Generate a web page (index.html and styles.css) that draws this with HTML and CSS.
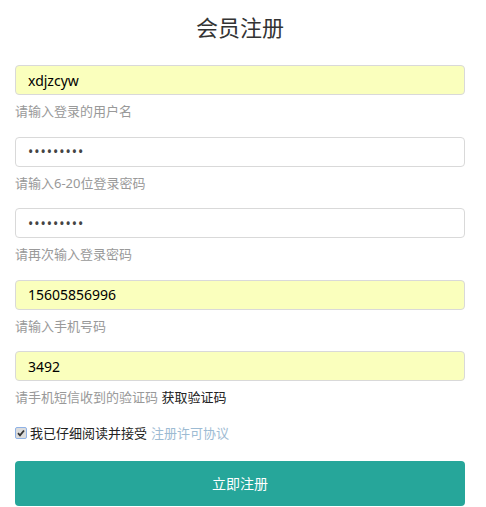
FILE: index.html
```html
<!DOCTYPE html>
<html lang="zh-CN">
<head>
    <meta charset="UTF-8">
    <meta name="viewport" content="width=device-width, initial-scale=1.0">
    <title>会员注册</title>
    <link rel="stylesheet" href="styles.css">
</head>
<body>
    <div class="container">
        <h2 class="title">会员注册</h2>
        <form class="reg-form">
            <div class="form-group">
                <input class="form-control filled" type="text" value="xdjzcyw">
                <p class="help">请输入登录的用户名</p>
            </div>
            <div class="form-group">
                <input class="form-control pwd" type="password" value="123456789">
                <p class="help">请输入6-20位登录密码</p>
            </div>
            <div class="form-group">
                <input class="form-control pwd" type="password" value="123456789">
                <p class="help">请再次输入登录密码</p>
            </div>
            <div class="form-group">
                <input class="form-control filled" type="text" value="15605856996">
                <p class="help">请输入手机号码</p>
            </div>
            <div class="form-group">
                <input class="form-control filled" type="text" value="3492">
                <p class="help">请手机短信收到的验证码 <a class="get-code" href="#">获取验证码</a></p>
            </div>
            <div class="agree">
                <span class="check">
                    <svg width="8" height="8" viewBox="0 0 8 8"><path d="M1 4.2 L3 6.3 L7 1.5" fill="none" stroke="#333" stroke-width="1.8"/></svg>
                </span>
                我已仔细阅读并接受 <a class="license" href="#">注册许可协议</a>
            </div>
            <button class="btn-submit" type="button">立即注册</button>
        </form>
    </div>
</body>
</html>
```

FILE: styles.css
```css
*{
    margin: 0;
    padding: 0;
    box-sizing: border-box;
}

body{
    font-family: "Noto Sans", "Noto Sans CJK SC", sans-serif;
    color: #333;
    background: #fff;
}

.container{
    padding: 0 21px 0 15px;
}

.title{
    font-size: 22px;
    font-weight: normal;
    text-align: center;
    line-height: 32px;
    margin-top: 11px;
    margin-bottom: 22px;
    color: #333;
}

.form-group{
    margin-bottom: 15.5px;
}

.form-control{
    display: block;
    width: 100%;
    height: 30px;
    padding: 0 12px;
    font-family: inherit;
    font-size: 14px;
    color: #555;
    background: #fff;
    border: 1px solid #d9d9d9;
    border-radius: 4px;
    outline: none;
}

.form-control.pwd{
    letter-spacing: 1px;
    color: #444;
}

.form-control.filled{
    background: #faffbd;
    color: #000;
}

.help{
    margin-top: 6px;
    font-size: 13px;
    line-height: 20px;
    color: #999;
}

.get-code{
    color: #222;
    text-decoration: none;
}

.agree{
    display: flex;
    align-items: center;
    margin-top: 15px;
    font-size: 13px;
    line-height: 20px;
    color: #222;
}

.check{
    display: inline-flex;
    align-items: center;
    justify-content: center;
    width: 12px;
    height: 12px;
    margin-right: 3px;
    border: 1px solid #8fb2e6;
    border-radius: 2px;
    background: #dcdcdc;
}

.license{
    color: #9dbbd3;
    text-decoration: none;
    margin-left: 4px;
}

.btn-submit{
    display: block;
    width: 100%;
    height: 45px;
    margin-top: 18px;
    border: none;
    border-radius: 4px;
    background: #26a69a;
    color: #fff;
    font-family: inherit;
    font-size: 14px;
    cursor: pointer;
}
```
